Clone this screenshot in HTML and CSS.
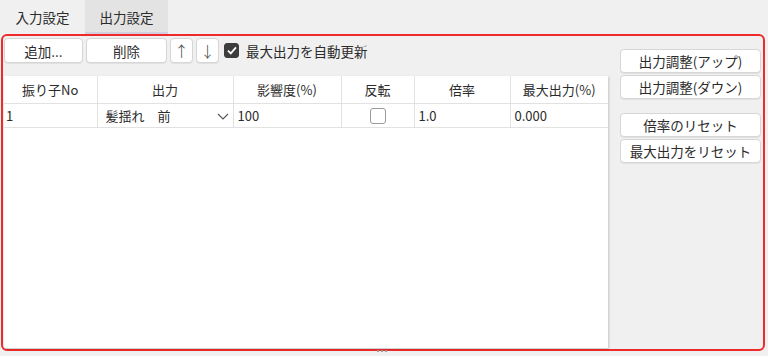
FILE: index.html
```html
<!DOCTYPE html>
<html lang="ja">
<head>
    <meta charset="UTF-8">
    <title>出力設定</title>
    <link rel="stylesheet" href="styles.css">
</head>
<body>

    <div class="tabs">
        <div class="tab">入力設定</div>
        <div class="tab active">出力設定</div>
    </div>

    <div class="panel">
        <div class="main">
            <div class="toolbar">
                <button class="btn btn-add">追加...</button>
                <button class="btn btn-del">削除</button>
                <button class="btn btn-arrow">↑</button>
                <button class="btn btn-arrow">↓</button>
                <label class="auto">
                    <span class="check checked">
                        <svg width="10" height="9" viewBox="0 0 10 9"><path d="M1 4.6 L3.8 7.4 L9 1.4" fill="none" stroke="#fff" stroke-width="1.8"/></svg>
                    </span>
                    最大出力を自動更新
                </label>
            </div>

            <div class="grid-wrap">
                <table class="grid">
                    <colgroup>
                        <col style="width: 93px">
                        <col style="width: 136px">
                        <col style="width: 108px">
                        <col style="width: 73px">
                        <col style="width: 96px">
                        <col style="width: 98px">
                    </colgroup>
                    <thead>
                        <tr>
                            <th>振り子No</th>
                            <th>出力</th>
                            <th>影響度(%)</th>
                            <th>反転</th>
                            <th>倍率</th>
                            <th>最大出力(%)</th>
                        </tr>
                    </thead>
                    <tbody>
                        <tr>
                            <td class="c-no">1</td>
                            <td class="c-out">
                                <span>髪揺れ　前</span>
                                <svg class="chev" width="12" height="7" viewBox="0 0 12 7"><path d="M1 1 L6 6 L11 1" fill="none" stroke="#555" stroke-width="1.1"/></svg>
                            </td>
                            <td>100</td>
                            <td class="c-flip"><span class="check"></span></td>
                            <td>1.0</td>
                            <td>0.000</td>
                        </tr>
                    </tbody>
                </table>
            </div>
        </div>

        <div class="side">
            <button class="btn side-btn">出力調整(アップ)</button>
            <button class="btn side-btn">出力調整(ダウン)</button>
            <button class="btn side-btn gap">倍率のリセット</button>
            <button class="btn side-btn">最大出力をリセット</button>
        </div>

        <div class="grip"><i></i><i></i><i></i></div>
    </div>

</body>
</html>
```

FILE: styles.css
```css
:root {
    --background: #f0f0f0;
    --tab-active: #e3e3e3;
    --border: #d6d6d6;
    --grid-line: #e2e2e2;
    --text: #2b2b2b;
    --red: #ee2a2a;
}

body {
    margin: 0;
    background: var(--background);
    color: var(--text);
    font-family: "Noto Sans CJK JP", "Noto Sans", sans-serif;
    font-size: 13.5px;
    width: 768px;
    height: 356px;
    overflow: hidden;
}

.tabs {
    display: flex;
    height: 34px;
}

.tab {
    width: 85px;
    height: 34px;
    line-height: 34px;
    text-align: center;
    box-sizing: border-box;
}

.tab.active {
    width: 83px;
    background: var(--tab-active);
    border-bottom: 2px solid #d2cfdf;
}

.panel {
    position: relative;
    display: flex;
    margin: 0 3px 0 1px;
    height: 317px;
    border: 2px solid var(--red);
    border-radius: 6px;
    box-sizing: border-box;
}

.main {
    display: flex;
    flex-direction: column;
    width: 605px;
    margin-left: 1px;
    padding-top: 2px;
}

.toolbar {
    display: flex;
    align-items: center;
    height: 25px;
    gap: 3px;
}

.btn {
    height: 25px;
    padding: 0;
    background: #fff;
    border: 1px solid var(--border);
    border-radius: 4px;
    box-shadow: 0 1px 0 rgba(0, 0, 0, 0.06);
    color: var(--text);
    font-family: inherit;
    font-size: 13.5px;
    line-height: 22px;
    box-sizing: border-box;
}

.btn-add {
    width: 79px;
}

.btn-del {
    width: 81px;
}

.btn-arrow {
    width: 23px;
    font-size: 15px;
    font-weight: 300;
    color: #444;
}

.auto {
    display: flex;
    align-items: center;
    gap: 7px;
    margin-left: 2px;
}

.check {
    display: inline-flex;
    align-items: center;
    justify-content: center;
    width: 16px;
    height: 16px;
    border: 1px solid #9a9a9a;
    border-radius: 3px;
    background: #fff;
    box-sizing: border-box;
}

.check.checked {
    width: 15px;
    height: 15px;
    background: #3d3d3d;
    border-color: #3d3d3d;
}

.grid-wrap {
    flex: 1;
    margin: 13px 0 1px;
    width: 604px;
    background: #fff;
    box-shadow: 1px 1px 2px rgba(0, 0, 0, 0.18);
}

.grid {
    border-collapse: collapse;
    table-layout: fixed;
    width: 604px;
    font-size: 13px;
}

.grid th {
    height: 27px;
    font-weight: normal;
    text-align: center;
    border: 1px solid var(--grid-line);
    border-top: 0;
    padding: 0;
}

.grid td {
    height: 23px;
    padding: 0 0 0 4px;
    border: 1px solid var(--grid-line);
    white-space: nowrap;
}

.grid tr > :first-child {
    border-left: 0;
}

.grid tr > :last-child {
    border-right: 0;
}

.grid td.c-no {
    padding-left: 2px;
}

.grid td.c-out {
    padding-left: 8px;
    position: relative;
}

.chev {
    position: absolute;
    right: 4px;
    top: 9px;
}

.grid td.c-flip {
    padding: 0;
    text-align: center;
    line-height: 0;
}

.side {
    display: flex;
    flex-direction: column;
    width: 141px;
    margin-left: 11px;
    padding-top: 13px;
    gap: 2px;
}

.side-btn {
    width: 141px;
    height: 24px;
    line-height: 21px;
}

.side-btn.gap {
    margin-top: 12px;
}

.grip {
    position: absolute;
    left: 374px;
    bottom: -3px;
    display: flex;
    gap: 2px;
}

.grip i {
    width: 2px;
    height: 2px;
    background: #9a9a9a;
}
```
